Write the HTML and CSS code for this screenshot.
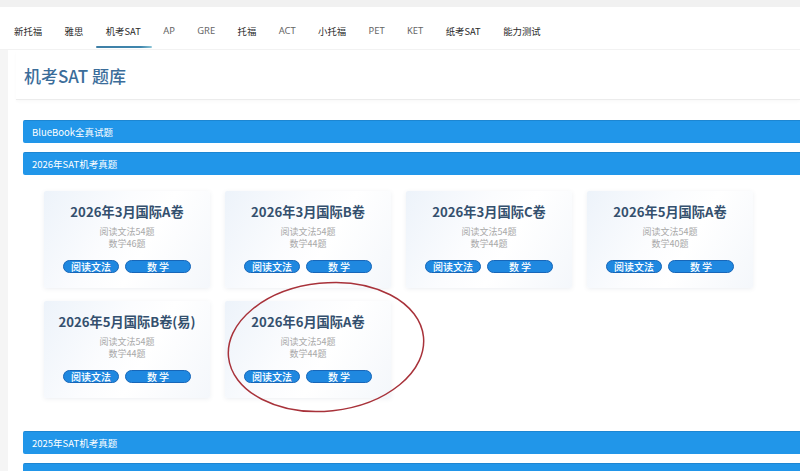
FILE: index.html
```html
<!DOCTYPE html>
<html lang="zh-CN">
<head>
<meta charset="utf-8">
<title>机考SAT 题库</title>
<link rel="stylesheet" href="styles.css">
</head>
<body>
<div class="topstrip"></div>
<nav class="tabs">
  <a class="tab cjk">新托福</a>
  <a class="tab cjk">雅思</a>
  <a class="tab active">机考SAT</a>
  <a class="tab latin">AP</a>
  <a class="tab latin">GRE</a>
  <a class="tab cjk">托福</a>
  <a class="tab latin">ACT</a>
  <a class="tab cjk">小托福</a>
  <a class="tab latin">PET</a>
  <a class="tab latin">KET</a>
  <a class="tab">纸考SAT</a>
  <a class="tab cjk">能力测试</a>
</nav>
<div class="page">
  <main class="panel">
    <div class="title-wrap"><h1 class="title">机考SAT 题库</h1></div>
    <div class="list">
      <div class="bar">BlueBook全真试题</div>
      <div class="bar">2026年SAT机考真题</div>
      <div class="grid">
        <div class="card">
          <div class="card-title">2026年3月国际A卷</div>
          <div class="sub">阅读文法54题</div>
          <div class="sub">数学46题</div>
          <div class="btns"><span class="btn b1">阅读文法</span><span class="btn b2">数 学</span></div>
        </div>
        <div class="card">
          <div class="card-title">2026年3月国际B卷</div>
          <div class="sub">阅读文法54题</div>
          <div class="sub">数学44题</div>
          <div class="btns"><span class="btn b1">阅读文法</span><span class="btn b2">数 学</span></div>
        </div>
        <div class="card">
          <div class="card-title">2026年3月国际C卷</div>
          <div class="sub">阅读文法54题</div>
          <div class="sub">数学44题</div>
          <div class="btns"><span class="btn b1">阅读文法</span><span class="btn b2">数 学</span></div>
        </div>
        <div class="card">
          <div class="card-title">2026年5月国际A卷</div>
          <div class="sub">阅读文法54题</div>
          <div class="sub">数学40题</div>
          <div class="btns"><span class="btn b1">阅读文法</span><span class="btn b2">数 学</span></div>
        </div>
        <div class="card">
          <div class="card-title">2026年5月国际B卷(易)</div>
          <div class="sub">阅读文法54题</div>
          <div class="sub">数学44题</div>
          <div class="btns"><span class="btn b1">阅读文法</span><span class="btn b2">数 学</span></div>
        </div>
        <div class="card">
          <div class="card-title">2026年6月国际A卷</div>
          <div class="sub">阅读文法54题</div>
          <div class="sub">数学44题</div>
          <div class="btns"><span class="btn b1">阅读文法</span><span class="btn b2">数 学</span></div>
        </div>
      </div>
      <div class="bar bar-gap">2025年SAT机考真题</div>
      <div class="bar"></div>
    </div>
  </main>
</div>
<svg class="annot" width="800" height="471" viewBox="0 0 800 471" aria-hidden="true">
  <ellipse cx="326" cy="347" rx="98" ry="64" transform="rotate(-6 326 347)" fill="none" stroke="#a8323a" stroke-width="1.5"/>
</svg>
</body>
</html>
```
FILE: styles.css
```css
* { box-sizing: border-box; }
html, body { margin: 0; padding: 0; }
body {
  width: 800px;
  height: 471px;
  overflow: hidden;
  background: #ffffff;
  font-family: "Noto Sans", "Noto Sans CJK SC", sans-serif;
  color: #333;
  position: relative;
}
.topstrip {
  height: 7px;
  background: #f1f1f1;
  box-shadow: 0 1px 2px rgba(0,0,0,0.04);
}
.tabs {
  display: flex;
  gap: 22.4px;
  padding-left: 14px;
  height: 43px;
  border-bottom: 1px solid #f2f2f2;
  background: #fff;
}
.tab {
  position: relative;
  font-size: 9.4px;
  line-height: 14px;
  padding-top: 17px;
  color: #2a2a2a;
  white-space: nowrap;
  font-family: "Noto Sans CJK SC", sans-serif;
}
.tab.latin { color: #666; font-family: "Noto Sans", sans-serif; }
.tab.active::after {
  content: "";
  position: absolute;
  left: -10px;
  right: -11px;
  top: 39px;
  height: 2px;
  background: linear-gradient(90deg, #3f7fa6, #3f86ad 80%, #8fc7d8);
  border-radius: 1px;
}
.page {
  background: #f5f5f5;
  padding-left: 8px;
  height: 421px;
}
.panel {
  background: #fff;
  height: 100%;
  padding-left: 8px;
}
.title-wrap {
  padding: 14px 0 11px 8px;
  border-bottom: 1px solid #ececec;
  box-shadow: 0 2px 3px rgba(0,0,0,0.025);
}
.title {
  margin: 0;
  font-family: "Noto Sans CJK SC", sans-serif;
  font-size: 17px;
  line-height: 24px;
  font-weight: 500;
  color: #3b6d9a;
}
.list {
  padding: 20px 0 0 7px;
}
.bar {
  height: 23px;
  background: #2196e9;
  border-top: 1px solid #1d86d2;
  border-radius: 2px 0 0 2px;
  color: #fff;
  font-size: 9.5px;
  line-height: 22px;
  padding-left: 9px;
  margin-bottom: 9px;
  font-family: "Noto Sans CJK SC", sans-serif;
}
.bar-gap { margin-top: 33px; }
.grid {
  display: grid;
  grid-template-columns: repeat(4, 166px);
  column-gap: 15px;
  row-gap: 13px;
  padding: 7px 0 0 21px;
}
.card {
  height: 97px;
  padding-top: 13px;
  text-align: center;
  background: linear-gradient(120deg, #edf3fa 0%, #fbfcfe 40%, #ffffff 60%, #f4f7fb 100%);
  box-shadow: 0 1px 4px rgba(80,100,130,0.10);
  border-radius: 2px;
}
.card-title {
  font-family: "Noto Sans CJK SC", sans-serif;
  font-size: 13.2px;
  line-height: 16px;
  font-weight: 700;
  color: #34506e;
  margin-bottom: 6px;
}
.sub {
  font-family: "Noto Sans CJK SC", sans-serif;
  font-size: 9px;
  line-height: 12px;
  color: #a8a8a8;
}
.btns {
  display: flex;
  justify-content: center;
  gap: 6px;
  margin-top: 10px;
}
.btn {
  height: 13px;
  line-height: 11px;
  border-radius: 7px;
  background: #1f88e0;
  border: 1px solid #1766b8;
  color: #fff;
  font-size: 10px;
  font-family: "Noto Sans CJK SC", sans-serif;
  font-weight: 500;
}
.b1 { width: 56px; }
.b2 { width: 66px; }
.annot {
  position: absolute;
  left: 0;
  top: 0;
  pointer-events: none;
}
```
